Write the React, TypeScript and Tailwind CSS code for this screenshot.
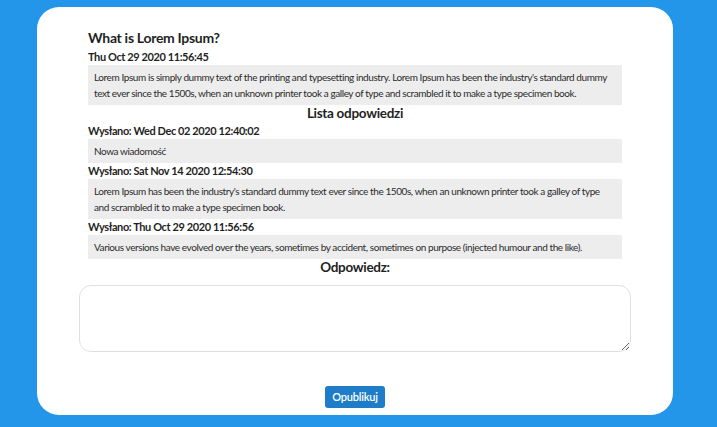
const replies = [
  {
    date: "Wed Dec 02 2020 12:40:02",
    text: "Nowa wiadomość",
  },
  {
    date: "Sat Nov 14 2020 12:54:30",
    text: "Lorem Ipsum has been the industry's standard dummy text ever since the 1500s, when an unknown printer took a galley of type and scrambled it to make a type specimen book.",
  },
  {
    date: "Thu Oct 29 2020 11:56:56",
    text: "Various versions have evolved over the years, sometimes by accident, sometimes on purpose (injected humour and the like).",
  },
];

export default function App() {
  return (
    <div className="h-[427px] w-full bg-[#2496ea] pt-[7px] px-[37px] font-['Lato',sans-serif] text-[#1f1f1f]">
      <div className="h-[408px] w-[636px] bg-white rounded-[22px] flex flex-col">
        <div className="w-[534px] mx-auto pt-[21px]">
          <h2 className="text-[14px] font-bold leading-[20px] tracking-[-0.3px]">What is Lorem Ipsum?</h2>
          <p className="text-[11px] font-bold leading-[14px] tracking-[-0.4px] mt-[2px]">Thu Oct 29 2020 11:56:45</p>
          <div className="bg-[#ededed] mt-[1px] px-[6px] py-[4px] text-[10px] leading-[16px] tracking-[-0.42px] text-[#2b2b2b]">
            Lorem Ipsum is simply dummy text of the printing and typesetting industry. Lorem Ipsum has been the industry's standard dummy text ever since the 1500s, when an unknown printer took a galley of type and scrambled it to make a type specimen book.
          </div>
          <h3 className="text-center text-[13.5px] font-bold leading-[16px] tracking-[-0.3px]">Lista odpowiedzi</h3>
          {replies.map((r, i) => (
            <div key={r.date}>
              <p className={`text-[11px] font-bold leading-[14px] tracking-[-0.4px] ${i === 0 ? "mt-[3px]" : "mt-[1px]"}`}>
                Wysłano: {r.date}
              </p>
              <div className="bg-[#ededed] mt-[1px] px-[6px] py-[4px] text-[10px] leading-[16px] tracking-[-0.42px] text-[#2b2b2b]">
                {r.text}
              </div>
            </div>
          ))}
          <h3 className="text-center text-[13.5px] font-bold leading-[16px] tracking-[-0.3px]">Odpowiedz:</h3>
        </div>
        <div className="px-[42px] mt-[10px]">
          <textarea className="block w-full h-[67px] border border-[#e0e0e0] rounded-[12px] resize-y outline-none" />
        </div>
        <div className="flex justify-center mt-[34px]">
          <button className="h-[22px] px-[7px] bg-[#1e7cc8] rounded-[3px] text-white text-[11px] font-semibold tracking-[-0.2px]">
            Opublikuj
          </button>
        </div>
      </div>
    </div>
  );
}
